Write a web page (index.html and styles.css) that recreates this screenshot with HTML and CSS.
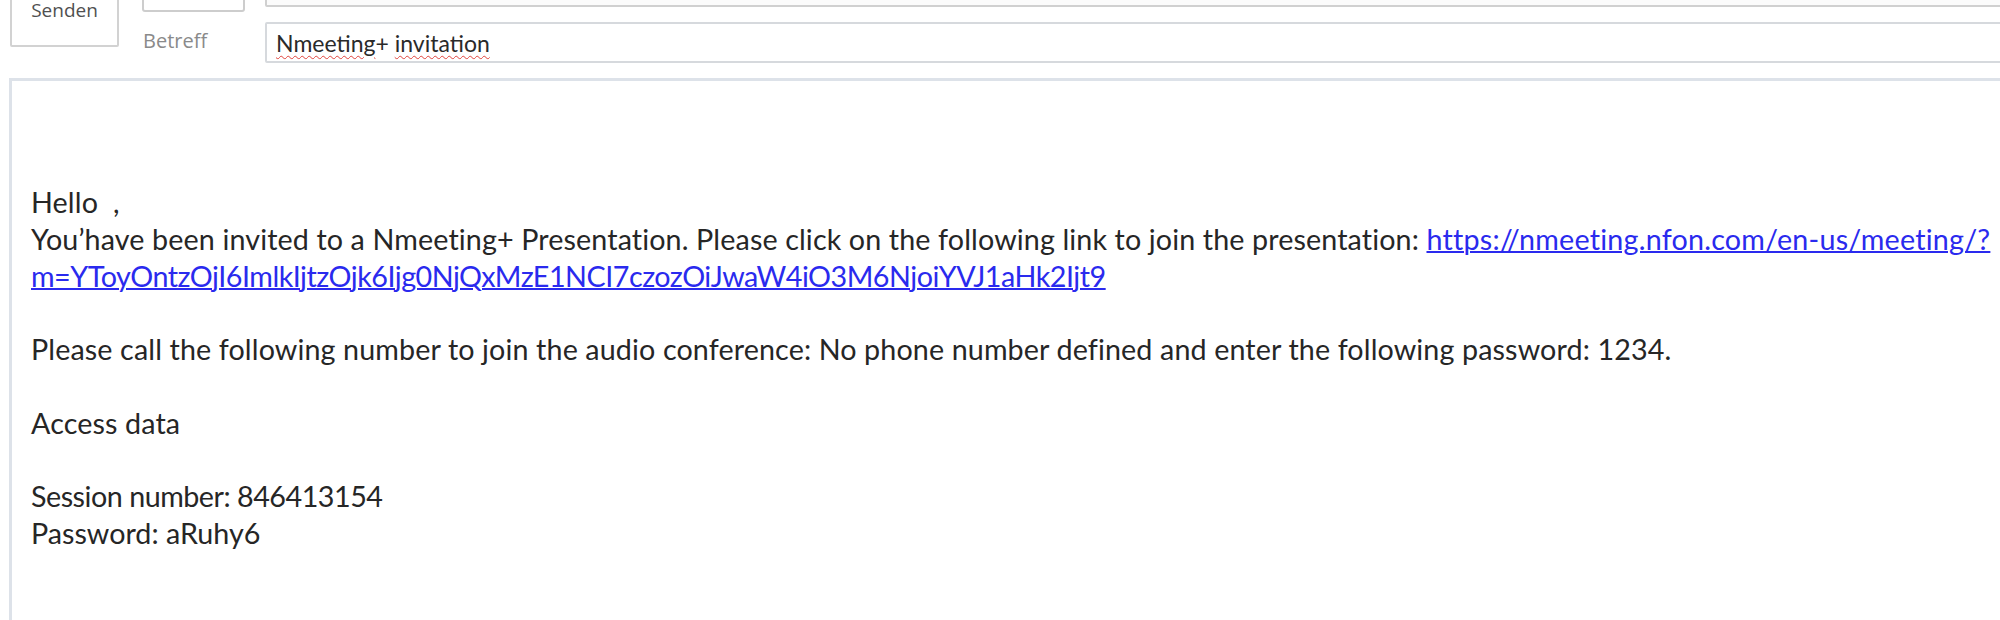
FILE: index.html
```html
<!DOCTYPE html>
<html lang="de">
<head>
<meta charset="utf-8">
<title>Nmeeting+ invitation</title>
<link rel="stylesheet" href="styles.css">
</head>
<body>
<div class="compose">
  <div class="head">
    <button class="send"><span class="send-label">Senden</span></button>
    <div class="fields">
      <div class="small-box"></div>
      <div class="to-field"></div>
      <div class="label">Betreff</div>
      <div class="subject"><span class="misspelt">Nmeeting</span>+ <span class="misspelt">invitation</span></div>
    </div>
  </div>
  <div class="body-box">
    <p class="para">Hello&nbsp; ,<br>You’have been invited to a Nmeeting+ Presentation. Please click on the following link to join the presentation: <a class="link" href="#"><span class="wide">https://nmeeting.nfon.com/en-us/meeting/?</span><br><span class="tight">m=YToyOntzOjI6ImlkIjtzOjk6Ijg0NjQxMzE1NCI7czozOiJwaW4iO3M6NjoiYVJ1aHk2Ijt9</span></a></p>
    <p class="para">Please call the following number to join the audio conference: No phone number defined and enter the following password: 1234.</p>
    <p class="para">Access data</p>
    <p class="para"><span class="tight">Session number: 846413154</span><br><span class="plain">Password: aRuhy6</span></p>
  </div>
</div>
</body>
</html>
```
FILE: styles.css
```css
html, body {
  margin: 0;
  padding: 0;
  background: #ffffff;
  overflow: hidden;
}
body {
  width: 2000px;
  height: 620px;
}
.compose {
  display: flex;
  flex-direction: column;
}
.head {
  display: flex;
  align-items: flex-start;
  padding-left: 10px;
}
.send {
  box-sizing: border-box;
  width: 109px;
  height: 107px;
  margin-top: -60px;
  padding: 0 0 23px 0;
  display: flex;
  flex-direction: column;
  justify-content: flex-end;
  align-items: center;
  background: #ffffff;
  border: 2px solid #d2d2d2;
  border-radius: 2px;
  font-family: "Open Sans", "Noto Sans", sans-serif;
  font-size: 19px;
  color: #505050;
}
.send-label {
  line-height: 24px;
}
.fields {
  flex: 1;
  display: grid;
  grid-template-columns: 103px 1fr;
  grid-template-rows: 40px 41px;
  column-gap: 20px;
  row-gap: 10px;
  margin-top: -28px;
  margin-left: 23px;
  margin-right: -20px;
}
.small-box {
  box-sizing: border-box;
  border: 2px solid #cdcdcd;
  border-radius: 3px;
  background: #ffffff;
}
.to-field {
  box-sizing: border-box;
  margin-bottom: 5px;
  border: 2px solid #d0d0d0;
  border-radius: 2px;
  background: #fbfbfb;
}
.label {
  align-self: start;
  margin-top: 5px;
  padding-left: 1px;
  font-family: "Open Sans", "Noto Sans", sans-serif;
  font-size: 20px;
  line-height: 28px;
  color: #8a8a8a;
}
.subject {
  box-sizing: border-box;
  display: flex;
  align-items: center;
  padding-left: 9px;
  border: 2px solid #d6d9dd;
  border-radius: 2px;
  font-family: Lato, "Noto Sans", sans-serif;
  font-size: 23px;
  color: #2a2a2a;
  white-space: pre;
}
.misspelt {
  text-decoration: underline wavy #e0433c;
  text-decoration-thickness: 1px;
  text-underline-offset: 3px;
}
.body-box {
  box-sizing: border-box;
  margin: 15px -20px 0 9px;
  height: 600px;
  padding: 103px 0 0 19px;
  border: 3px solid #dde2e9;
  font-family: Lato, "Noto Sans", sans-serif;
  font-size: 28.7px;
  line-height: 36.8px;
  letter-spacing: 0.12px;
  color: #262626;
}
.para {
  margin: 0 0 36.8px 0;
  white-space: nowrap;
}
.tight {
  letter-spacing: -0.48px;
}
.wide {
  letter-spacing: 0.22px;
}
.plain {
  letter-spacing: 0;
}
.link {
  color: #2a2aee;
  text-decoration: underline;
  text-decoration-thickness: 1.5px;
}
```
